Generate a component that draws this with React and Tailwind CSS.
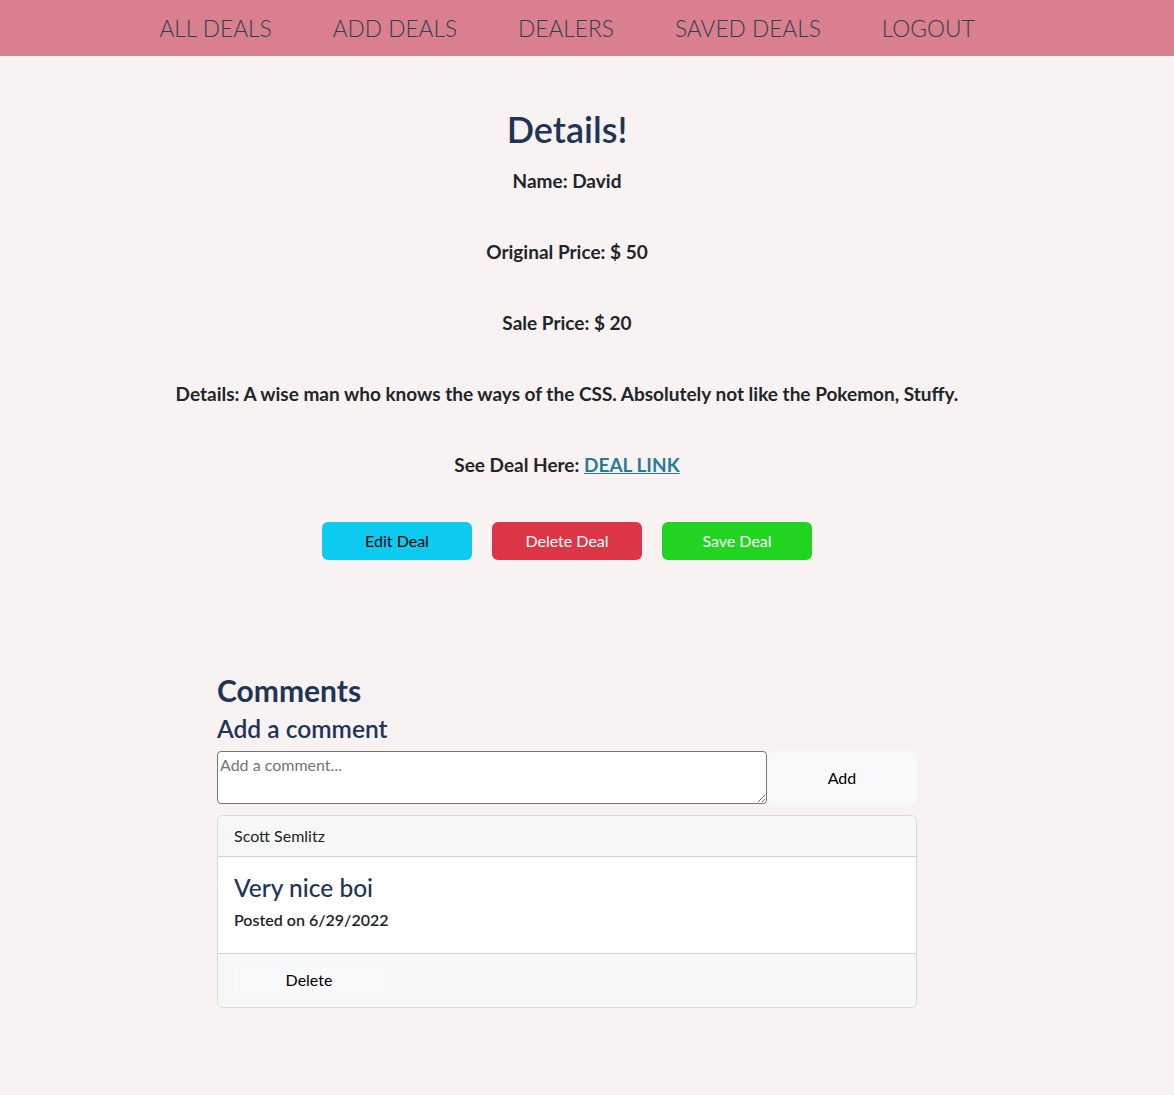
export default function App() {
  const font = { fontFamily: '"Segoe UI", Lato, "Noto Sans", sans-serif' };
  return (
    <div className="min-h-[1095px] bg-[#f8f2f2] text-[#212529]" style={font}>
      <nav className="h-14 bg-[#da7f8d] pr-10 pt-[3px] flex items-center justify-center gap-[61px]">
        {["ALL DEALS", "ADD DEALS", "DEALERS", "SAVED DEALS", "LOGOUT"].map((t) => (
          <a key={t} className="text-[22.7px] font-light text-[#2b4152] leading-none">{t}</a>
        ))}
      </nav>
      <div className="pr-10 flex flex-col items-center text-center">
        <h1 className="mt-[52px] text-[36px] font-semibold text-[#1d3557] leading-[1.2]">Details!</h1>
        <div className="mt-[16px] flex flex-col gap-[44px] text-[19px] font-bold leading-[27px]">
          <p>Name: David</p>
          <p>Original Price: $ 50</p>
          <p>Sale Price: $ 20</p>
          <p>Details: A wise man who knows the ways of the CSS. Absolutely not like the Pokemon, Stuffy.</p>
          <p>
            See Deal Here: <a className="text-[#2a7a9a] underline">DEAL LINK</a>
          </p>
        </div>
        <div className="mt-[44px] flex gap-5">
          <button className="w-[150px] h-[38px] rounded-md bg-[#0dcaf0] text-black text-base">Edit Deal</button>
          <button className="w-[150px] h-[38px] rounded-md bg-[#dc3545] text-white text-base">Delete Deal</button>
          <button className="w-[150px] h-[38px] rounded-md bg-[#22d422] text-white text-base">Save Deal</button>
        </div>
      </div>
      <div className="mt-[112px] ml-[217px] w-[700px]">
        <h2 className="text-[30px] font-bold text-[#1d3557] leading-[1.2]">Comments</h2>
        <h3 className="mt-[6px] text-[24.5px] font-semibold text-[#1d3557] leading-[1.2]">Add a comment</h3>
        <div className="mt-[7px] flex">
          <textarea
            placeholder="Add a comment..."
            className="w-[550px] h-[53px] rounded-[4px] border border-[#767676] bg-white px-[2px] py-[1px] text-[16px] placeholder:text-[#757575] resize-y"
          />
          <button className="w-[150px] h-[54px] rounded-md bg-[#f8f9fa] text-base text-black">Add</button>
        </div>
        <div className="mt-[10px] rounded-md border border-[#d9d9d9] overflow-hidden">
          <div className="h-[41px] bg-[#f7f7f7] border-b border-[#d3d3d3] px-4 flex items-center text-base">Scott Semlitz</div>
          <div className="bg-white px-4 pt-[16px] pb-[21px]">
            <h5 className="text-[24.5px] font-medium text-[#1d3557] leading-[1.2]">Very nice boi</h5>
            <p className="mt-[6px] text-base font-semibold">Posted on 6/29/2022</p>
          </div>
          <div className="bg-[#f7f7f7] border-t border-[#d3d3d3] px-4 py-2">
            <button className="w-[150px] h-[37px] rounded-md bg-[#f8f9fa] text-base text-black">Delete</button>
          </div>
        </div>
      </div>
    </div>
  );
}
